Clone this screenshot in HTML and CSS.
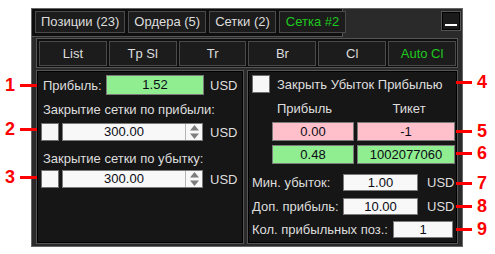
FILE: index.html
```html
<!DOCTYPE html>
<html lang="ru">
<head>
<meta charset="utf-8">
<link rel="stylesheet" href="styles.css">
</head>
<body>
<div class="panel">
  <div class="header">
    <div class="tabs">
      <div class="tab">Позиции (23)</div>
      <div class="tab">Ордера (5)</div>
      <div class="tab">Сетки (2)</div>
      <div class="tab green">Сетка #2</div>
    </div>
    <div class="minbtn"><span class="minbar"></span></div>
  </div>
  <div class="toolbar">
    <div class="btn">List</div>
    <div class="btn">Tp Sl</div>
    <div class="btn">Tr</div>
    <div class="btn">Br</div>
    <div class="btn">Cl</div>
    <div class="btn green">Auto Cl</div>
  </div>
  <div class="content">
    <div class="box box-left">
      <div class="row row-profit">
        <div class="lbl lbl-profit">Прибыль:</div>
        <div class="field field-green field-profit">1.52</div>
        <div class="unit">USD</div>
      </div>
      <div class="caption caption-1">Закрытие сетки по прибыли:</div>
      <div class="row row-spin row-spin-1">
        <div class="check"></div>
        <div class="spin">
          <div class="spin-val">300.00</div>
          <div class="spin-arrows">
            <svg width="11" height="16" viewBox="0 0 11 16"><polygon points="5.5,1 10,6.5 1,6.5" fill="#7d7d7d"/><polygon points="1,9.5 10,9.5 5.5,15" fill="#7d7d7d"/></svg>
          </div>
        </div>
        <div class="unit unit-spin">USD</div>
      </div>
      <div class="caption caption-2">Закрытие сетки по убытку:</div>
      <div class="row row-spin row-spin-2">
        <div class="check"></div>
        <div class="spin">
          <div class="spin-val">300.00</div>
          <div class="spin-arrows">
            <svg width="11" height="16" viewBox="0 0 11 16"><polygon points="5.5,1 10,6.5 1,6.5" fill="#7d7d7d"/><polygon points="1,9.5 10,9.5 5.5,15" fill="#7d7d7d"/></svg>
          </div>
        </div>
        <div class="unit unit-spin">USD</div>
      </div>
    </div>
    <div class="box box-right">
      <div class="row row-check">
        <div class="check"></div>
        <div class="check-lbl">Закрыть Убыток Прибылью</div>
      </div>
      <div class="row row-head">
        <div class="head head-1">Прибыль</div>
        <div class="head head-2">Тикет</div>
      </div>
      <div class="row row-pair row-pink">
        <div class="field field-pink pair-1">0.00</div>
        <div class="field field-pink pair-2">-1</div>
      </div>
      <div class="row row-pair row-grn">
        <div class="field field-green pair-1">0.48</div>
        <div class="field field-green pair-2">1002077060</div>
      </div>
      <div class="row row-opt row-opt-1">
        <div class="opt-lbl">Мин. убыток:</div>
        <div class="field field-white opt-field">1.00</div>
        <div class="unit unit-opt">USD</div>
      </div>
      <div class="row row-opt row-opt-2">
        <div class="opt-lbl">Доп. прибыль:</div>
        <div class="field field-white opt-field">10.00</div>
        <div class="unit unit-opt">USD</div>
      </div>
      <div class="row row-opt row-opt-3">
        <div class="opt-lbl opt-lbl-wide">Кол. прибыльных поз.:</div>
        <div class="field field-white opt-field-small">1</div>
      </div>
    </div>
  </div>
</div>

<div class="mark mark-l m1"><span class="num">1</span><span class="line"></span></div>
<div class="mark mark-l m2"><span class="num">2</span><span class="line"></span></div>
<div class="mark mark-l m3"><span class="num">3</span><span class="line"></span></div>
<div class="mark mark-r m4"><span class="line"></span><span class="num">4</span></div>
<div class="mark mark-r m5"><span class="line"></span><span class="num">5</span></div>
<div class="mark mark-r m6"><span class="line"></span><span class="num">6</span></div>
<div class="mark mark-r m7"><span class="line"></span><span class="num">7</span></div>
<div class="mark mark-r m8"><span class="line"></span><span class="num">8</span></div>
<div class="mark mark-r m9"><span class="line"></span><span class="num">9</span></div>
</body>
</html>
```

FILE: styles.css
```css
* { box-sizing: border-box; }
html, body {
  margin: 0;
  padding: 0;
  background: #ffffff;
}
body {
  position: relative;
  width: 495px;
  height: 254px;
  font-family: "Liberation Sans", Arial, sans-serif;
  font-size: 13px;
  color: #dedede;
  padding: 8px 0 0 31px;
}
.panel {
  width: 432px;
  height: 239px;
  border: 1px solid #666666;
  background: #2a2a2a;
  display: flex;
  flex-direction: column;
}
.header {
  height: 28px;
  display: flex;
  justify-content: space-between;
  align-items: flex-start;
}
.tabs {
  width: 311px;
  height: 28px;
  background: #0e0e0e;
  border-right: 1px solid #555555;
  border-bottom: 1px solid #555555;
  padding: 2px 0 0 3px;
  display: flex;
  gap: 3px;
}
.tab {
  height: 22px;
  line-height: 20px;
  border: 1px solid #4a4a4a;
  background: #1c1c1c;
  padding: 0 5px;
  white-space: nowrap;
}
.tab.green { padding: 0 6px; }
.green { color: #1fca1f; }
.minbtn {
  width: 20px;
  height: 20px;
  margin: 2px 1px 0 0;
  border: 1px solid #555555;
  background: #1a1a1a;
  box-shadow: inset 0 0 0 1px #000;
  position: relative;
}
.minbar {
  position: absolute;
  left: 3px;
  top: 12px;
  width: 12px;
  height: 2px;
  background: #ffffff;
}
.toolbar {
  margin: 1px 4px 0 4px;
  height: 30px;
  border: 1px solid #555555;
  background: #0e0e0e;
  padding: 2px 1px 1px 2px;
  display: flex;
  gap: 2px;
}
.btn {
  flex: 1;
  height: 25px;
  line-height: 23px;
  text-align: center;
  border: 1px solid #4a4a4a;
  background: #1c1c1c;
}
.content {
  margin: 2px 4px 0 4px;
  height: 174px;
  display: flex;
  gap: 3px;
}
.box {
  border: 1px solid #555555;
  box-shadow: inset 0 0 0 1px #000;
  background: #161616;
  padding: 4px 0 0 4px;
}
.box-left { width: 208px; }
.box-right { width: 211px; }
.row {
  display: flex;
  align-items: center;
}
.row-profit { height: 20px; }
.lbl-profit {
  width: 65px;
  padding-left: 2px;
}
.field {
  border: 1px solid #7a7a7a;
  color: #0a0a14;
  text-align: center;
  white-space: nowrap;
}
.field-green { background: #90ee90; }
.field-pink { background: #ffc0cb; }
.field-white { background: #f8f8f8; }
.field-profit {
  width: 98px;
  height: 20px;
  line-height: 18px;
}
.unit { margin-left: 6px; }
.unit-spin { margin-left: 7px; }
.caption {
  line-height: 16px;
  padding-left: 2px;
  white-space: nowrap;
}
.caption-1 { margin-top: 7px; }
.caption-2 { margin-top: 10px; }
.row-spin { height: 18px; }
.row-spin-1 { margin-top: 5px; }
.row-spin-2 { margin-top: 3px; }
.check {
  width: 18px;
  height: 18px;
  background: #f7f7f7;
  border: 1px solid #6e6e6e;
  flex: none;
}
.spin {
  margin-left: 3px;
  width: 141px;
  height: 18px;
  background: #f8f8f8;
  border: 1px solid #7a7a7a;
  display: flex;
  color: #0a0a14;
}
.spin-val {
  flex: 1;
  text-align: center;
  line-height: 16px;
}
.spin-arrows {
  width: 17px;
  border-left: 1px solid #b4b4b4;
  display: flex;
  align-items: center;
  justify-content: center;
}
.spin-arrows svg { display: block; }
.row-check { height: 18px; }
.check-lbl {
  margin-left: 7px;
  white-space: nowrap;
}
.row-head {
  margin-top: 8px;
  height: 16px;
  line-height: 16px;
}
.head-1 {
  margin-left: 25px;
  width: 80px;
}
.head-2 {
  margin-left: 0;
  width: 100px;
  padding-left: 4px;
  text-align: center;
}
.row-pair { height: 19px; }
.row-pink { margin-top: 5px; }
.row-grn { margin-top: 4px; }
.row-pair .field {
  height: 19px;
  line-height: 17px;
}
.pair-1 {
  margin-left: 20px;
  width: 82px;
}
.pair-2 {
  margin-left: 3px;
  width: 98px;
}
.row-opt { height: 17px; }
.row-opt-1 { margin-top: 10px; }
.row-opt-2 { margin-top: 7px; }
.row-opt-3 { margin-top: 6px; }
.opt-lbl {
  width: 91px;
  white-space: nowrap;
}
.opt-lbl-wide { width: 141px; }
.opt-field {
  width: 75px;
  height: 17px;
  line-height: 15px;
}
.opt-field-small {
  width: 60px;
  height: 17px;
  line-height: 15px;
}
.unit-opt { margin-left: 9px; }

/* annotation overlays */
.mark {
  position: absolute;
  display: flex;
  align-items: center;
  height: 20px;
}
.mark .num {
  font-family: "Liberation Sans", Arial, sans-serif;
  font-weight: bold;
  font-size: 18px;
  line-height: 20px;
  color: #ff0000;
  width: 14px;
  text-align: center;
}
.mark .line {
  display: block;
  height: 3px;
  width: 17px;
  background: #ff0000;
}
.mark-l { left: 3px; }
.mark-l .line { margin-left: 3px; }
.mark-r { left: 456px; }
.mark-r .line { width: 16px; margin-right: 5px; }
.mark-r .num { text-align: left; }
.m1 { top: 75px; }
.m2 { top: 119px; }
.m3 { top: 167px; }
.m4 { top: 72px; }
.m5 { top: 121px; }
.m6 { top: 143px; }
.m7 { top: 173px; }
.m8 { top: 196px; }
.m9 { top: 219px; }
```
